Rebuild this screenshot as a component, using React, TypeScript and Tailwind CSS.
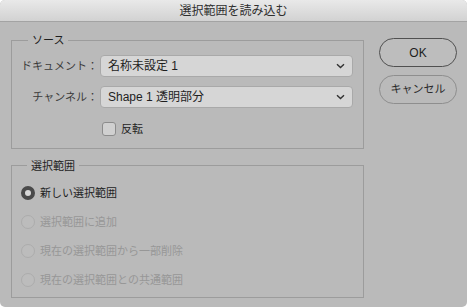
import React from "react";

const FONT = "font-['Liberation_Sans','Noto_Sans_CJK_JP',sans-serif]";

function Chevron() {
  return (
    <svg width="9" height="6" viewBox="0 0 9 6" className="shrink-0">
      <path d="M1 1.2 L4.5 4.6 L8 1.2" fill="none" stroke="#333" strokeWidth="1.4" />
    </svg>
  );
}

function Select({ value }: { value: string }) {
  return (
    <div className="flex h-[22px] w-[253px] items-center justify-between rounded-[4px] border border-[#a9a9a9] bg-[#d6d6d6] pl-[7px] pr-[7px] text-[12px] text-[#1e1e1e]">
      <span>{value}</span>
      <Chevron />
    </div>
  );
}

function Radio({ label, checked, disabled }: { label: string; checked?: boolean; disabled?: boolean }) {
  return (
    <div className="flex h-[29px] items-center gap-[5px] pl-[9px]">
      {checked ? (
        <div className="h-[14px] w-[14px] rounded-full border-[4px] border-[#4a4a4a] bg-[#d8d8d8]" />
      ) : (
        <div className="h-[14px] w-[14px] rounded-full border border-[#acacac] bg-[#bcbcbc]" />
      )}
      <span className={`text-[11px] ${disabled ? "text-[#979797]" : "text-[#1e1e1e]"}`}>{label}</span>
    </div>
  );
}

export default function App() {
  return (
    <div className={`h-[307px] w-[467px] bg-white ${FONT}`}>
      <div className="flex h-[307px] w-[467px] flex-col overflow-hidden rounded-[5px] bg-[#bababa]">
        <div className="flex h-[22px] shrink-0 items-center justify-center border-b border-[#a3a3a3] bg-gradient-to-b from-[#e9e9e9] to-[#d2d2d2] text-[12px] text-[#2e2e2e]">
          選択範囲を読み込む
        </div>
        <div className="flex flex-row">
          <div className="ml-[11px] flex w-[353px] flex-col">
            <fieldset className="mt-[11px] border border-[#9c9c9c] pb-[10px] pr-[9px]">
              <legend className="ml-[16px] px-[4px] text-[11px] leading-[14px] text-[#1e1e1e]">ソース</legend>
              <div className="mt-[8px] flex items-center">
                <div className="w-[86px] text-right text-[11px] text-[#3a3a3a]">ドキュメント：</div>
                <div className="ml-[2px]">
                  <Select value="名称未設定 1" />
                </div>
              </div>
              <div className="mt-[9px] flex items-center">
                <div className="w-[86px] text-right text-[11px] text-[#3a3a3a]">チャンネル：</div>
                <div className="ml-[2px]">
                  <Select value="Shape 1 透明部分" />
                </div>
              </div>
              <div className="mt-[13px] flex items-center pl-[90px]">
                <div className="h-[14px] w-[14px] rounded-[3px] border border-[#8c8c8c] bg-[#d0d0d0]" />
                <span className="ml-[5px] text-[11px] text-[#1e1e1e]">反転</span>
              </div>
            </fieldset>
            <fieldset className="mt-[10px] border border-[#9c9c9c] pb-[2px]">
              <legend className="ml-[15px] px-[4px] text-[11px] leading-[14px] text-[#1e1e1e]">選択範囲</legend>
              <div className="mt-[6px] flex flex-col">
                <Radio label="新しい選択範囲" checked />
                <Radio label="選択範囲に追加" disabled />
                <Radio label="現在の選択範囲から一部削除" disabled />
                <Radio label="現在の選択範囲との共通範囲" disabled />
              </div>
            </fieldset>
          </div>
          <div className="ml-[15px] mt-[16px] flex flex-col gap-[8px]">
            <div className="flex h-[29px] w-[78px] items-center justify-center rounded-full border border-[#505050] bg-[#bdbdbd] text-[12px] text-[#1e1e1e]">
              OK
            </div>
            <div className="flex h-[29px] w-[78px] items-center justify-center rounded-full border border-[#8e8e8e] bg-[#bababa] text-[11px] text-[#2a2a2a]">
              キャンセル
            </div>
          </div>
        </div>
      </div>
    </div>
  );
}
